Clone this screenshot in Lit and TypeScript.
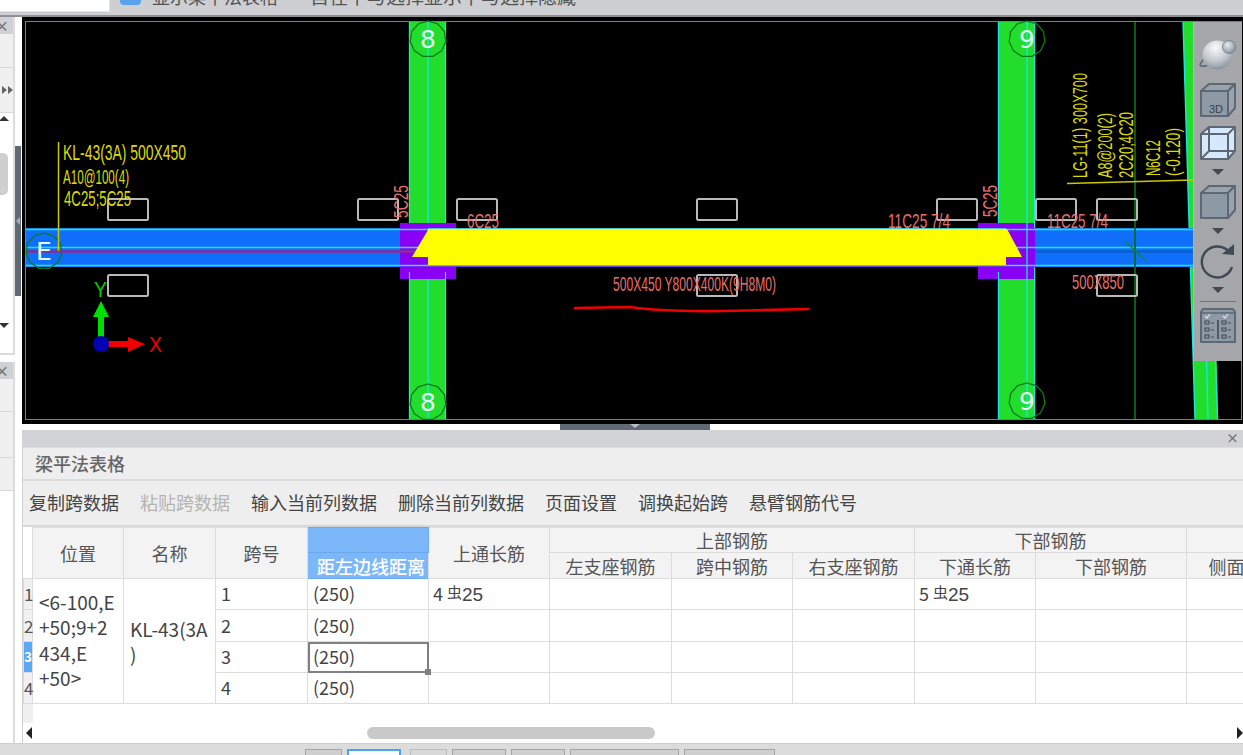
import { LitElement, html, css, svg } from "lit";
import { customElement } from "lit/decorators.js";

const poly = (cx: number, cy: number, r: number, n = 11) =>
  Array.from({ length: n }, (_, i) => {
    const a = (i / n) * Math.PI * 2 - Math.PI / 2;
    return `${(cx + r * Math.cos(a)).toFixed(1)},${(cy + r * Math.sin(a)).toFixed(1)}`;
  }).join(" ");

const t = (x: number, y: number, len: number, s: string, cls: string, size = 21) =>
  svg`<text x=${x} y=${y} textLength=${len} lengthAdjust="spacingAndGlyphs" font-size=${size} class=${cls}>${s}</text>`;

const rt = (x: number, y: number, len: number, s: string, cls: string, size = 21) =>
  svg`<text transform="translate(${x} ${y}) rotate(-90)" textLength=${len} lengthAdjust="spacingAndGlyphs" font-size=${size} class=${cls}>${s}</text>`;

const axisMark = (cx: number, cy: number, label: string) => svg`
  <polygon points=${poly(cx, cy, 18)} class="mark"></polygon>
  <text x=${cx} y=${cy + 9} text-anchor="middle" font-size="25" class="marktext">${label}</text>`;

const rects: [number, number][] = [
  [108, 199], [358, 199], [457, 199], [697, 199], [937, 199], [1036, 199], [1097, 199],
  [108, 275], [697, 275], [1097, 275],
];

const columns = [9, 91, 92, 92, 121, 121, 122, 121, 122, 121, 151, 80];
const tools = [
  { label: "复制跨数据" }, { label: "粘贴跨数据", off: true }, { label: "输入当前列数据" },
  { label: "删除当前列数据" }, { label: "页面设置" }, { label: "调换起始跨" }, { label: "悬臂钢筋代号" },
];
const tabs = ["t1", "on", "t3", "w54", "w54", "w109", "w91"];

@customElement("app-root")
export class AppRoot extends LitElement {
  static styles = css`
    :host { display: block; width: 1243px; height: 755px; overflow: hidden; background: #fff;
      font-family: "Noto Sans CJK SC", "Noto Sans", sans-serif; color: #444; }
    .page { display: flex; flex-direction: column; height: 755px; }
    .top { height: 15px; flex: none; background: #cdcfd2; display: flex; overflow: hidden; align-items: flex-start;
      border-bottom: 2px solid #8e9093; box-sizing: content-box; }
    .combo { width: 109px; height: 11px; background: #fff; border-right: 1px solid #e2e2e2; border-bottom: 1px solid #e2e2e2; flex: none; }
    .check { width: 21px; height: 6px; margin: -1px 11px 0 10px; background: #5aa2f0; border-radius: 0 0 4px 4px; flex: none; }
    .toplabel { font-size: 18px; line-height: 18px; margin-top: -13px; white-space: nowrap; color: #555; }
    .toplabel.second { margin-left: 32px; font-size: 19px; }
    .main { flex: 1; display: flex; min-height: 0; }
    .side { width: 22px; flex: none; position: relative; display: flex; flex-direction: column; }
    .dock { width: 15px; box-sizing: border-box; border-right: 2px solid #dcdcdc; display: flex; flex-direction: column; }
    .dock.one { height: 338px; border-bottom: 2px solid #dcdcdc; margin-bottom: 7px; }
    .dock.two { flex: 1; }
    .dockhead { height: 17px; flex: none; background: #cfd1d5; color: #777; font-size: 14px; line-height: 16px; font-weight: 700; overflow: hidden; text-indent: -5px; }
    .dockrow { background: #f0f0f0; border-bottom: 1px solid #d8d8d8; flex: none; display: flex; align-items: center; }
    .h33 { height: 33px; } .h44 { height: 44px; } .h32 { height: 32px; } .h45 { height: 45px; background: #f0f0f0; }
    .list { flex: 1; position: relative; background: #fff; display: flex; flex-direction: column; align-items: flex-start; justify-content: space-between; padding: 3px 0 25px 0; box-sizing: border-box; }
    .up { width: 0; height: 0; border: 5px solid transparent; border-top: 0; border-bottom: 5px solid #333; margin-left: -1px; }
    .down { width: 0; height: 0; border: 5px solid transparent; border-bottom: 0; border-top: 5px solid #333; margin-left: -1px; }
    .thumb { position: absolute; left: 0; top: 40px; width: 8px; height: 42px; background: #cfcfcf; border-radius: 0 5px 5px 0; }
    .ff { display: flex; padding-left: 2px; }
    .ff i { width: 0; height: 0; border-left: 5px solid #666; border-top: 4px solid transparent; border-bottom: 4px solid transparent; margin-right: 1px; }
    .vsplit { position: absolute; left: 15px; top: 129px; width: 6px; height: 150px; background: #5f6a75; display: flex; align-items: center; justify-content: center; }
    .vsplit i { width: 0; height: 0; border-right: 4px solid #aab; border-top: 4px solid transparent; border-bottom: 4px solid transparent; }
    .work { flex: 1; min-width: 0; display: flex; flex-direction: column; }
    .canvas { height: 407px; flex: none; position: relative; background: #000; overflow: hidden; }
    .canvas svg.cad { display: block; }
    .cad text { font-family: "Liberation Sans", sans-serif; }
    .ye { fill: #dcdc00; }
    .pk { fill: #e8706c; }
    .axisy { fill: #00d000; }
    .axisx { fill: #f00000; }
    .mark { fill: none; stroke: #0b7a18; stroke-width: 1.3; }
    .marktext { fill: #e4fff0; font-family: "DejaVu Sans", sans-serif !important; }
    .hsplit { height: 6px; flex: none; background: #fff; display: flex; justify-content: center; padding-left: 5px; }
    .hsplit div { width: 150px; background: #5f6a75; display: flex; justify-content: center; }
    .hsplit i { width: 0; height: 0; border-top: 4px solid #b8bec4; border-left: 5px solid transparent; border-right: 5px solid transparent; }
    .viewbar { position: absolute; left: 1171px; top: 5px; width: 49px; height: 339px; background: #a4a6a9; border-left: 1px solid #b4b6b8;
      box-sizing: border-box; display: flex; flex-direction: column; align-items: center; gap: 7px; padding-top: 16px; }
    .viewbar svg { display: block; flex: none; }
    .viewbar .sphere { margin-bottom: 5px; }
    .viewbar .sep { width: 36px; height: 1px; background: #72767b; margin: -1px 0; flex: none; }
    .panel { flex: 1; min-height: 0; display: flex; flex-direction: column; border-left: 1px solid #d0d0d0; overflow: hidden; }
    .panelhead { height: 17px; flex: none; background: #d2d3d6; display: flex; justify-content: flex-end; color: #777; font-size: 13px; line-height: 16px; padding-right: 4px; font-weight: 700; }
    .title { height: 31px; flex: none; background: #eee; border-bottom: 2px solid #dcdcdc; border-top: 1px solid #ddd; box-sizing: content-box; font-size: 18px; font-weight: 500; color: #666; line-height: 30px; padding-left: 12px; }
    .tools { height: 44px; flex: none; background: #eee; border-bottom: 2px solid #d8d8d8; display: flex; align-items: center; gap: 21px; padding: 0 0 2px 6px; box-sizing: content-box; height: 42px; font-size: 18px; color: #444; white-space: nowrap; }
    .tools .off { color: #b4b4b4; }
    table { border-collapse: collapse; table-layout: fixed; width: 1243px; font-size: 18px; }
    th, td { padding: 0; border: 1px solid #dcdcdc; box-sizing: border-box; }
    tr.hr1 { height: 25px; } tr.hr2 { height: 26px; } tr.r31 { height: 31px; } tr.r32 { height: 32px; }
    th { background: #f3f3f3; font-weight: 400; color: #555; text-align: center; line-height: 20px; }
    th.corner { background: #fff; border: 0; }
    th.active { background: #7cb8f9; border-color: #6aa9ee; }
    th.activeb { background: #7cb8f9; border-color: #6aa9ee; color: #fff; font-weight: 500; text-align: right; padding-right: 3px; }
    td { color: #444; line-height: 25.5px; padding-left: 5px; white-space: nowrap; vertical-align: middle; }
    td.num { background: #f0f0f0; color: #555; padding: 0; text-align: center; font-size: 17px; }
    td.num.on { background: #5da8f5; color: #fff; font-weight: 700; font-size: 13px; }
    td.pos { padding-left: 6px; font-size: 19px; padding-bottom: 3px; }
    td.name { padding-left: 6px; font-size: 19px; }
    td.sel { position: relative; outline: 2px solid #808080; outline-offset: -2px; }
    td.sel::after { content: ""; position: absolute; right: -3px; bottom: -3px; width: 6px; height: 6px; background: #808080; }
    .rebar { display: inline-flex; align-items: baseline; margin-left: -1px; }
    .rebar b { font-weight: 400; font-size: 15px; position: relative; top: -3px; margin: 0 0 0 4px; }
    .rebar span { font-family: "Liberation Sans", sans-serif; font-size: 19px; }
    .rest { flex: 1; display: flex; flex-direction: column; min-height: 0; }
    .stub { height: 19px; width: 10px; background: #f0f0f0; flex: none; }
    .scroll { flex: 1; display: flex; align-items: center; position: relative; padding-bottom: 1px; }
    .scroll .l { width: 0; height: 0; border-right: 6px solid #222; border-top: 6px solid transparent; border-bottom: 6px solid transparent; margin-left: 3px; }
    .scroll .r { width: 0; height: 0; border-left: 6px solid #222; border-top: 6px solid transparent; border-bottom: 6px solid transparent; margin-left: auto; margin-right: 0; }
    .scroll .bar { width: 288px; height: 12px; background: #c9c9c9; border-radius: 6px; margin-left: 335px; }
    .foot { height: 12px; flex: none; background: #dcdcdc; border-top: 1px solid #cfcfcf; box-sizing: border-box; display: flex; align-items: flex-end; gap: 5px; padding-left: 305px; overflow: hidden; }
    .foot div { height: 6px; background: #cfcfcf; border: 1px solid #a4a4a4; border-bottom: 0; box-sizing: border-box; width: 37px; }
    .foot .on { width: 54px; background: #fff; border-color: #4aa3f5; border-width: 2px; margin-right: 4px; }
    .foot .t3 { background: #d8d8d8; border-color: #bcbcbc; }
    .foot .w54 { width: 54px; } .foot .w109 { width: 109px; } .foot .w91 { width: 91px; }
  `;

  private cad() {
    return svg`
      <polygon points="1183,21 1215,21 1228,419 1195,419" fill="#22dd2c"></polygon>
      <path d="M1183 21 1195 419 M1206 340 1208 419" stroke="#19e6e0" stroke-width="1.4" fill="none"></path>
      <polygon points="1216,340 1243,340 1243,419 1218,419" fill="#000"></polygon>
      <path d="M1215.5 355 1217.500 419" stroke="#19e6e0" stroke-width="1.4"></path>

      <rect x="25.5" y="21.5" width="1216" height="398" fill="none" stroke="#7d7d7d"></rect>

      <rect x="409" y="22" width="37" height="397" fill="#22dd2c"></rect>
      <rect x="998" y="22" width="37" height="397" fill="#22dd2c"></rect>
      <path d="M409.5 22V419 M445.5 22V419 M428 22V419 M998.5 22V419 M1034.5 22V419 M1027 22V419" stroke="#19e6e0" stroke-width="1.3" fill="none"></path>
      <path d="M1135 22V419" stroke="#0a5c12" stroke-width="2"></path>

      <rect x="26" y="228" width="1167" height="39" fill="#0f6ffb"></rect>
      <rect x="400" y="223" width="56" height="56" fill="#8a00f5"></rect>
      <rect x="978" y="223" width="56" height="56" fill="#8a00f5"></rect>
      <rect x="428" y="228" width="607" height="39" fill="#8a00f5"></rect>
      <rect x="1035" y="228" width="158" height="39" fill="#0f6ffb"></rect>
      <path d="M409.5 272V279 M445.5 272V279 M998.5 272V279" stroke="#19e6e0" stroke-width="1.2"></path>
      <path d="M26 229.5H1193 M26 247.5H428 M1006 247.5H1193 M26 265.5H1193" stroke="#19e6e0" stroke-width="1.6"></path>
      <path d="M26 251.5H418" stroke="#8c2a96" stroke-width="2.4"></path>
      <path d="M1035 251.5H1193" stroke="#0b5ed0" stroke-width="2.4"></path>
      <polygon points="428,230 412,257 428,257 428,265 1006,265 1006,257 1022,257 1007,229 428,229" fill="#ffff00"></polygon>
      <path d="M428 228.5H1006 M428 265.5H1006" stroke="#4ec9c0" stroke-width="1.2"></path>
      <path d="M1027 223V279" stroke="#19e6e0" stroke-width="1.3"></path>
      <path d="M1135 228V267" stroke="#0b6a3a" stroke-width="2"></path>
      <path d="M1125 241 1145 260" stroke="#0a8a3a" stroke-width="1.5"></path>

      ${rects.map(([x, y]) => svg`<rect x=${x} y=${y} width="40" height="21" rx="1.5" fill="none" stroke="#b9b9b9" stroke-width="2"></rect>`)}

      ${axisMark(428, 39, "8")} ${axisMark(428, 402, "8")}
      ${axisMark(1027, 39, "9")} ${axisMark(1027, 401, "9")}
      ${axisMark(44, 251, "E")}

      <path d="M58.5 142V251" stroke="#c8c800" stroke-width="1.5"></path>
      ${t(63, 160, 123, "KL-43(3A) 500X450", "ye", 22)}
      ${t(63, 184, 66, "A10@100(4)", "ye", 20)}
      ${t(64, 206, 67, "4C25;5C25", "ye", 22)}

      ${rt(408, 218, 33, "5C25", "pk")}
      ${t(467, 228, 32, "6C25", "pk")}
      ${t(613, 291, 163, "500X450 Y800X400K(9H8M0)", "pk")}
      ${t(888, 228, 62, "11C25 7/4", "pk")}
      ${rt(997, 217, 32, "5C25", "pk")}
      ${t(1047, 228, 61, "11C25 7/4", "pk")}
      ${t(1072, 289, 52, "500X850", "pk")}

      ${rt(1087, 178, 105, "LG-11(1) 300X700", "ye")}
      ${rt(1112, 178, 65, "A8@200(2)", "ye")}
      ${rt(1133, 178, 66, "2C20;4C20", "ye")}
      ${rt(1160, 176, 36, "N6C12", "ye")}
      ${rt(1180, 176, 48, "(-0.120)", "ye")}
      <path d="M1067 183.5 1193 180" stroke="#c8c800" stroke-width="1.6"></path>

      <path d="M575 308 630 307C650 310 680 311.500 720 311 750 310.500 785 309.500 808 309" fill="none" stroke="#f00000" stroke-width="2.6" stroke-linecap="round"></path>

      <rect x="98" y="316" width="6" height="24" fill="#00e000"></rect>
      <polygon points="101,301 109,317 93,317" fill="#00e000"></polygon>
      ${t(94, 297, 13, "Y", "axisy", 22)}
      <rect x="108" y="341" width="21" height="6" fill="#f00000"></rect>
      <polygon points="128,337 145,344 128,352" fill="#f00000"></polygon>
      <circle cx="101" cy="344" r="8" fill="#0000b4"></circle>
      ${t(149, 352, 13, "X", "axisx", 22)}
    `;
  }

  private viewbar() {
    const st = "stroke:#5d6874;stroke-width:2;stroke-linejoin:round";
    const caret = html`<svg width="14" height="9" viewBox="0 0 14 9"><polygon points="1,1 13,1 7,7" fill="#45494f"></polygon></svg>`;
    const cube = (front: string, side: string, extra: unknown = null) => html`
      <svg width="38" height="36" viewBox="0 0 38 36">
        <polygon points="2,9 10,2 36,2 29,9" fill=${side} style=${st}></polygon>
        <polygon points="29,9 36,2 36,26 29,34" fill=${side} style=${st}></polygon>
        <rect x="2" y="9" width="27" height="25" fill=${front} style=${st}></rect>
        ${extra}
      </svg>`;
    return html`<div class="viewbar">
      <svg class="sphere" width="38" height="32" viewBox="0 0 38 32">
        <defs>
          <radialGradient id="ball" cx="0.45" cy="0.25" r="0.85"><stop offset="0" stop-color="#fafbfc"></stop><stop offset="0.55" stop-color="#c2c7cd"></stop><stop offset="1" stop-color="#77828d"></stop></radialGradient>
          <radialGradient id="moon" cx="0.4" cy="0.35" r="0.7"><stop offset="0" stop-color="#e8ebee"></stop><stop offset="1" stop-color="#858f99"></stop></radialGradient>
        </defs>
        <path d="M7 19C2 24 0 27 2 28 6 29 14 26 21 21" fill="none" stroke="#5d6874" stroke-width="1.6"></path>
        <circle cx="18" cy="17" r="14.500" fill="url(#ball)"></circle>
        <circle cx="30" cy="9" r="6.500" fill="url(#moon)" stroke="#6f7a85" stroke-width="0.8"></circle>
      </svg>
      ${cube("#8e99a6", "#98a3ae", svg`<text x="10" y="31" font-size="11" fill="#3a4149" font-family="Liberation Sans">3D</text>`)}
      <svg width="38" height="36" viewBox="0 0 38 36">
        <polygon points="2,9 10,2 36,2 36,26 29,34 2,34" fill="#d6e8fb"></polygon>
        <path d="M2 9 10 2H36V26L29 34H2Z M2 9H29V34 M29 9 36 2 M10 2V26H36 M10 26 2 34" fill="none" style=${st}></path>
      </svg>
      ${caret}
      ${cube("#8e99a6", "#98a3ae")}
      ${caret}
      <svg width="38" height="36" viewBox="0 0 38 36">
        <path d="M31 10A15.500 15.500 0 1 0 33 24" fill="none" stroke="#3f4a55" stroke-width="2.4"></path>
        <polygon points="23,11 35,12 35,1" fill="#3f4a55"></polygon>
      </svg>
      ${caret}
      <div class="sep"></div>
      <svg width="38" height="36" viewBox="0 0 38 36">
        <path d="M4 1H34L36 4V34H2V4Z" fill="#8e99a6" style=${st}></path>
        <path d="M2 5H36" stroke="#5d6874" stroke-width="1.4"></path>
        <path d="M19 12V31" stroke="#3f4a55" stroke-width="1.6"></path>
        <path d="M6 8 8 10 11 6 M24 8 26 10 29 6" fill="none" stroke="#e8edf2" stroke-width="1.1"></path>
        <path d="M6 13H10V16H6Z M6 20H10V23H6Z M6 27H10V30H6Z M23 13H27V16H23Z M23 20H27V23H23Z M23 27H27V30H23Z M12 15H15 M12 22H15 M12 29H15 M29 15H32 M29 22H32 M29 29H32" fill="none" stroke="#3f4a55" stroke-width="1.1"></path>
      </svg>
    </div>`;
  }

  private rows() {
    const rebar = (n: string) => html`<span class="rebar">${n}<b>虫</b><span>25</span></span>`;
    const data = [
      { n: "1", top: rebar("4"), bot: rebar("5"), cls: "r31" },
      { n: "2", cls: "r32" },
      { n: "3", cls: "r31", on: true },
      { n: "4", cls: "r31" },
    ];
    return data.map((r, i) => html`<tr class=${r.cls}>
      <td class="num ${r.on ? "on" : ""}">${r.n}</td>
      ${i === 0 ? html`
        <td class="pos" rowspan="4">&lt;6-100,E<br>+50;9+2<br>434,E<br>+50&gt;</td>
        <td class="name" rowspan="4">KL-43(3A<br>)</td>` : ""}
      <td>${r.n}</td>
      <td class=${r.on ? "sel" : ""}>(250)</td>
      <td>${r.top ?? ""}</td><td></td><td></td><td></td>
      <td>${r.bot ?? ""}</td><td></td><td></td>
    </tr>`);
  }

  render() {
    return html`<div class="page">
      <div class="top">
        <div class="combo"></div><div class="check"></div>
        <span class="toplabel">显示梁平法表格</span>
        <span class="toplabel second">自在下与选择显示下与选择隐藏</span>
      </div>
      <div class="main">
        <aside class="side">
          <div class="dock one">
            <div class="dockhead">×</div>
            <div class="dockrow h33"></div>
            <div class="dockrow h44"><div class="ff"><i></i><i></i></div></div>
            <div class="list"><div class="up"></div><div class="thumb"></div><div class="down"></div></div>
          </div>
          <div class="dock two">
            <div class="dockhead">×</div>
            <div class="dockrow h32"></div>
            <div class="dockrow h45"></div>
            <div class="dockrow h32"></div>
          </div>
          <div class="vsplit"><i></i></div>
        </aside>
        <div class="work">
          <div class="canvas">
            <svg class="cad" width="1221" height="407" viewBox="22 17 1221 407">${this.cad()}</svg>
            ${this.viewbar()}
          </div>
          <div class="hsplit"><div><i></i></div></div>
          <section class="panel">
            <div class="panelhead">×</div>
            <div class="title">梁平法表格</div>
            <div class="tools">${tools.map((b) => html`<span class=${b.off ? "off" : ""}>${b.label}</span>`)}</div>
            <table>
              <colgroup>${columns.map((w) => html`<col style="width:${w}px">`)}</colgroup>
              <tr class="hr1">
                <th class="corner" rowspan="2"></th>
                <th rowspan="2">位置</th><th rowspan="2">名称</th><th rowspan="2">跨号</th>
                <th class="active"></th>
                <th rowspan="2">上通长筋</th>
                <th colspan="3">上部钢筋</th>
                <th colspan="2">下部钢筋</th>
                <th></th>
              </tr>
              <tr class="hr2">
                <th class="activeb">距左边线距离</th>
                <th>左支座钢筋</th><th>跨中钢筋</th><th>右支座钢筋</th>
                <th>下通长筋</th><th>下部钢筋</th><th>侧面</th>
              </tr>
              ${this.rows()}
            </table>
            <div class="rest">
              <div class="stub"></div>
              <div class="scroll"><div class="l"></div><div class="bar"></div><div class="r"></div></div>
            </div>
          </section>
        </div>
      </div>
      <footer class="foot">${tabs.map((c) => html`<div class=${c}></div>`)}</footer>
    </div>`;
  }
}
